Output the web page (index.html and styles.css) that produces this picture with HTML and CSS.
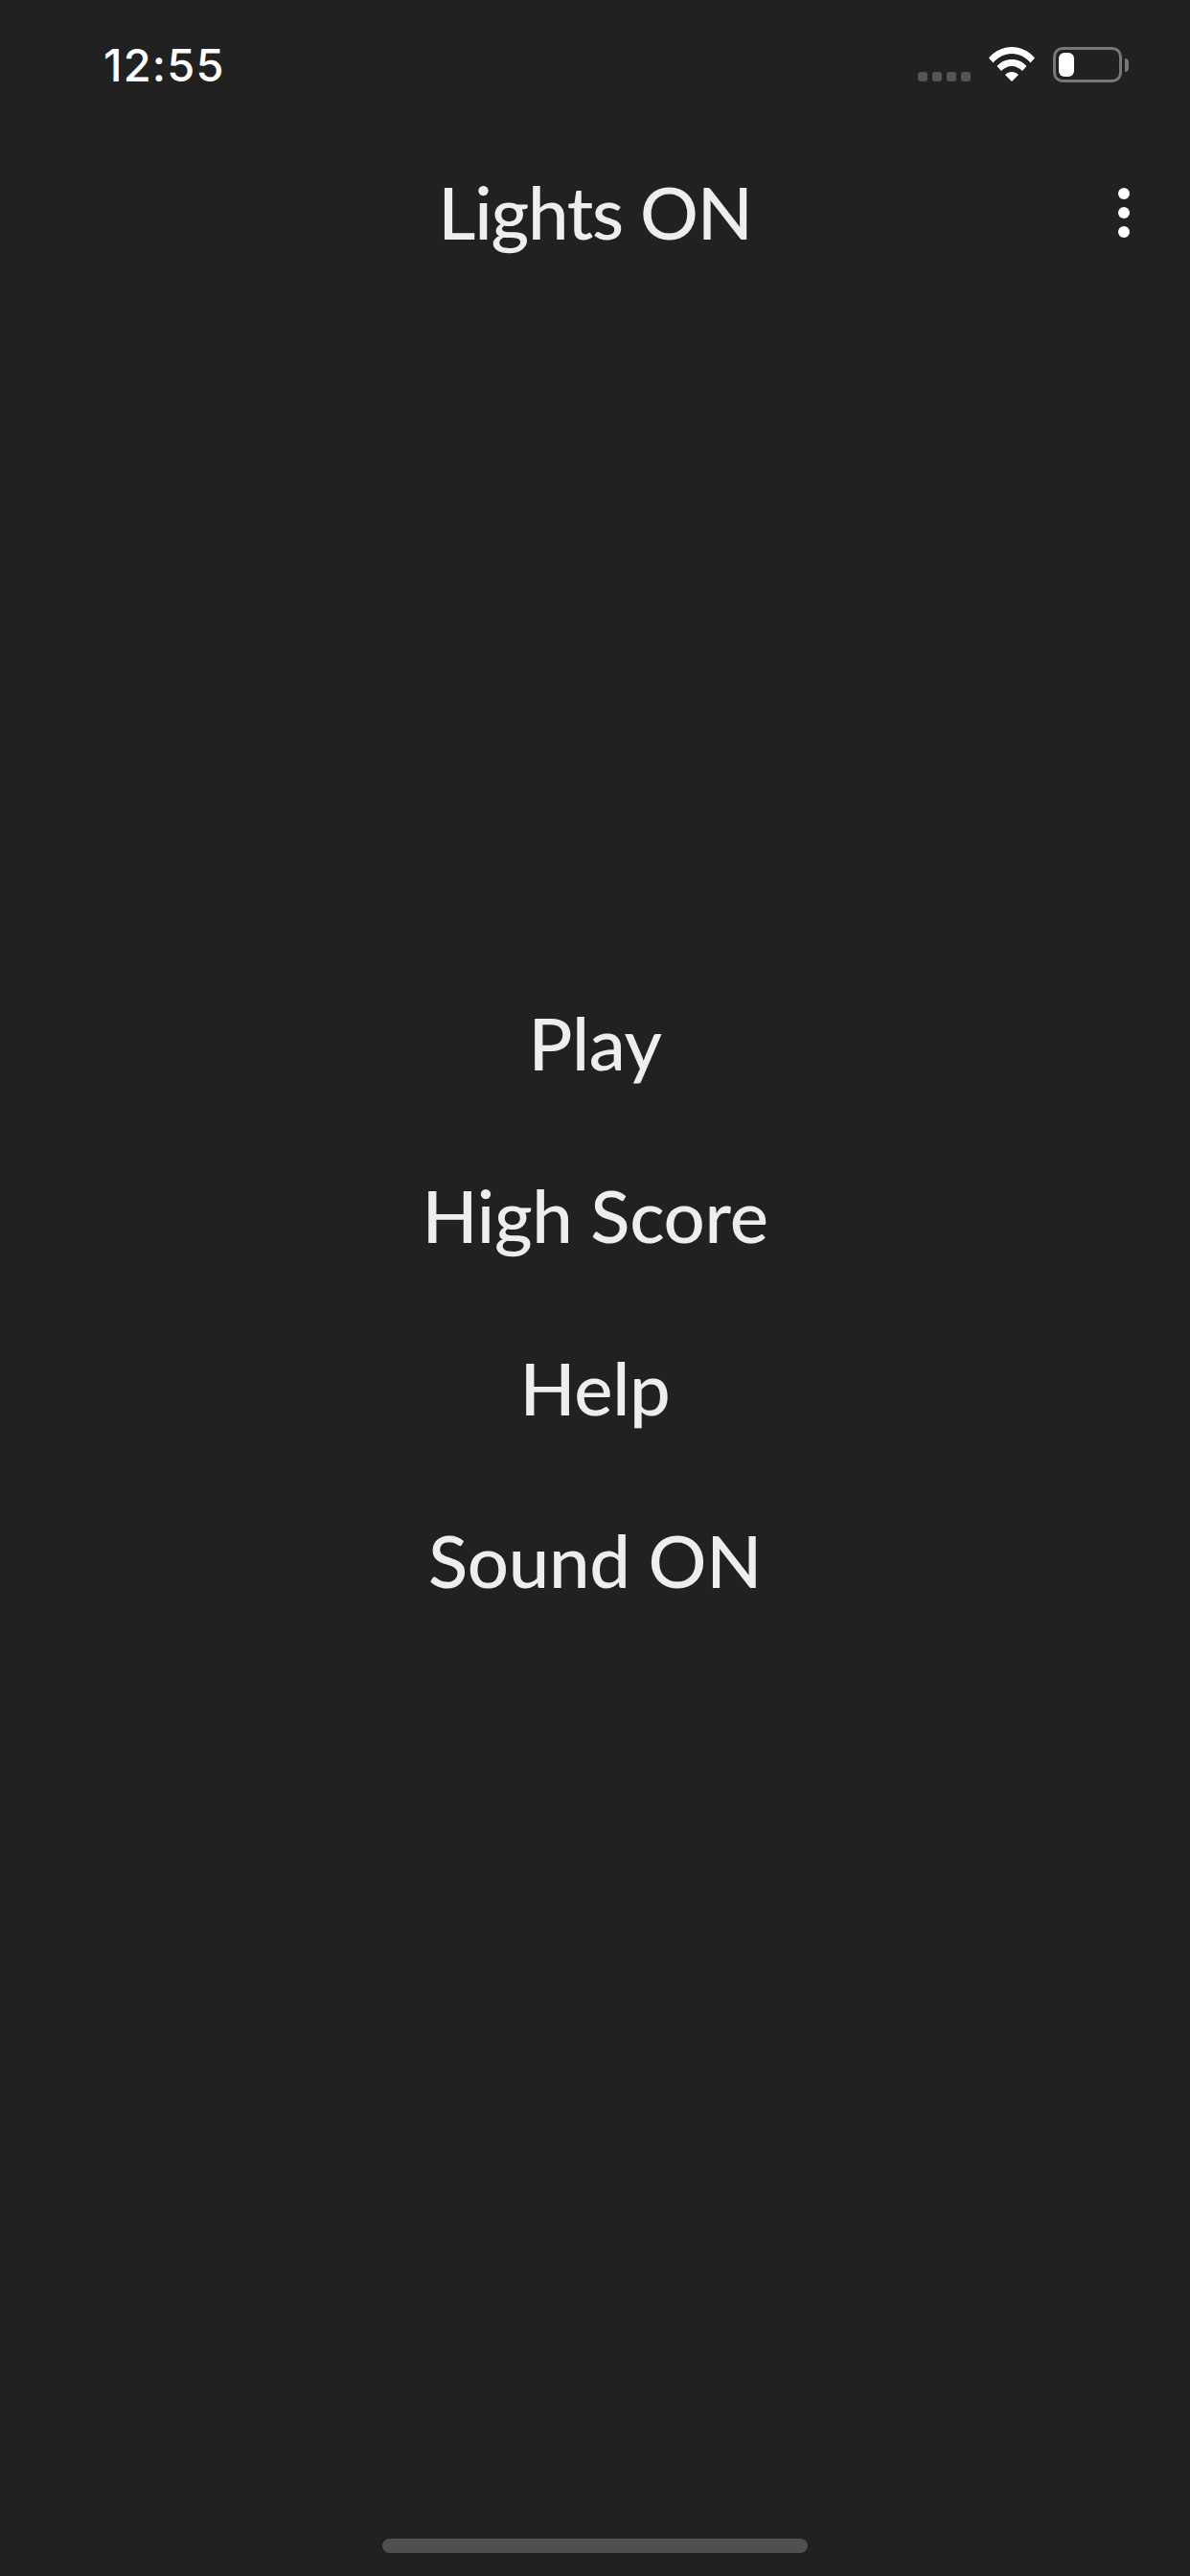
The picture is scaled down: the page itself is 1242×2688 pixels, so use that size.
FILE: index.html
```html
<!DOCTYPE html>
<html lang="en">
<head>
<meta charset="utf-8">
<title>Lights ON</title>
<link rel="stylesheet" href="styles.css">
</head>
<body>
<div class="screen">
  <div class="status">
    <span class="time">12:55</span>
    <div class="status-icons">
      <div class="signal"><i></i><i></i><i></i><i></i></div>
      <svg class="wifi" viewBox="0 0 48 36" width="48" height="36"><path d="M0 11.500C6.500 4 15 0 24 0s17.500 4 24 11.500l-4.500 5C38 10.500 31.500 7 24 7S10 10.500 4.500 16.500z M8.500 20C12.500 15.500 18 13 24 13s11.500 2.500 15.500 7L35 25c-3-3-6.800-5-11-5s-8 2-11 5z M17 29c2-1.800 4.400-3 7-3s5 1.200 7 3l-7 7z" fill="#fff"/></svg>
      <div class="battery"><div class="battery-body"><div class="battery-level"></div></div><div class="battery-nub"></div></div>
    </div>
  </div>
  <header class="appbar">
    <h1 class="title">Lights ON</h1>
    <div class="more"><i></i><i></i><i></i></div>
  </header>
  <nav class="menu">
    <a class="item">Play</a>
    <a class="item">High Score</a>
    <a class="item">Help</a>
    <a class="item">Sound ON</a>
  </nav>
  <div class="home-bar"></div>
</div>
</body>
</html>
```
FILE: styles.css
```css
* { box-sizing: border-box; }
html, body { margin: 0; padding: 0; }
body { background: #212121; }
.screen {
  width: 1242px;
  height: 2688px;
  background: #212121;
  color: #eeeeee;
  font-family: "Lato", sans-serif;
  font-weight: 500;
  display: flex;
  flex-direction: column;
  overflow: hidden;
}
.status {
  height: 183px;
  padding: 42px 64px 0 108px;
  display: flex;
  justify-content: space-between;
  align-items: flex-start;
}
.time {
  font-family: "Inter", sans-serif;
  font-weight: 500;
  font-size: 47px;
  line-height: 52px;
  letter-spacing: 1.2px;
  color: #fff;
}
.status-icons {
  display: flex;
  align-items: flex-start;
  margin-top: 7px;
}
.signal { display: flex; gap: 5px; margin-top: 26px; margin-right: 19px; }
.signal i { width: 10px; height: 10px; border-radius: 3px; background: #555; }
.wifi { display: block; margin-right: 19px; }
.battery { display: flex; align-items: center; height: 37px; }
.battery-body {
  width: 72px;
  height: 37px;
  border: 3px solid #777;
  border-radius: 10px;
  padding: 3px;
}
.battery-level { width: 16px; height: 25px; border-radius: 6px; background: #fff; }
.battery-nub {
  width: 4px;
  height: 14px;
  margin-left: 3px;
  background: #777;
  border-radius: 0 7px 7px 0;
}
.appbar {
  position: relative;
  height: 76px;
  display: flex;
  justify-content: center;
  align-items: center;
}
.title { margin: 0; font-size: 76px; font-weight: 500; line-height: 76px; letter-spacing: -1.2px; }
.more {
  position: absolute;
  right: 63px;
  top: 13px;
  display: flex;
  flex-direction: column;
  gap: 8px;
}
.more i { width: 12px; height: 12px; border-radius: 50%; background: #fff; }
.menu {
  margin-top: 739px;
  display: flex;
  flex-direction: column;
  align-items: center;
}
.item { font-size: 76px; line-height: 180px; letter-spacing: -0.3px; }
.home-bar {
  position: absolute;
  left: 399px;
  top: 2649px;
  width: 444px;
  height: 15px;
  border-radius: 8px;
  background: #4f4f4f;
}
```
